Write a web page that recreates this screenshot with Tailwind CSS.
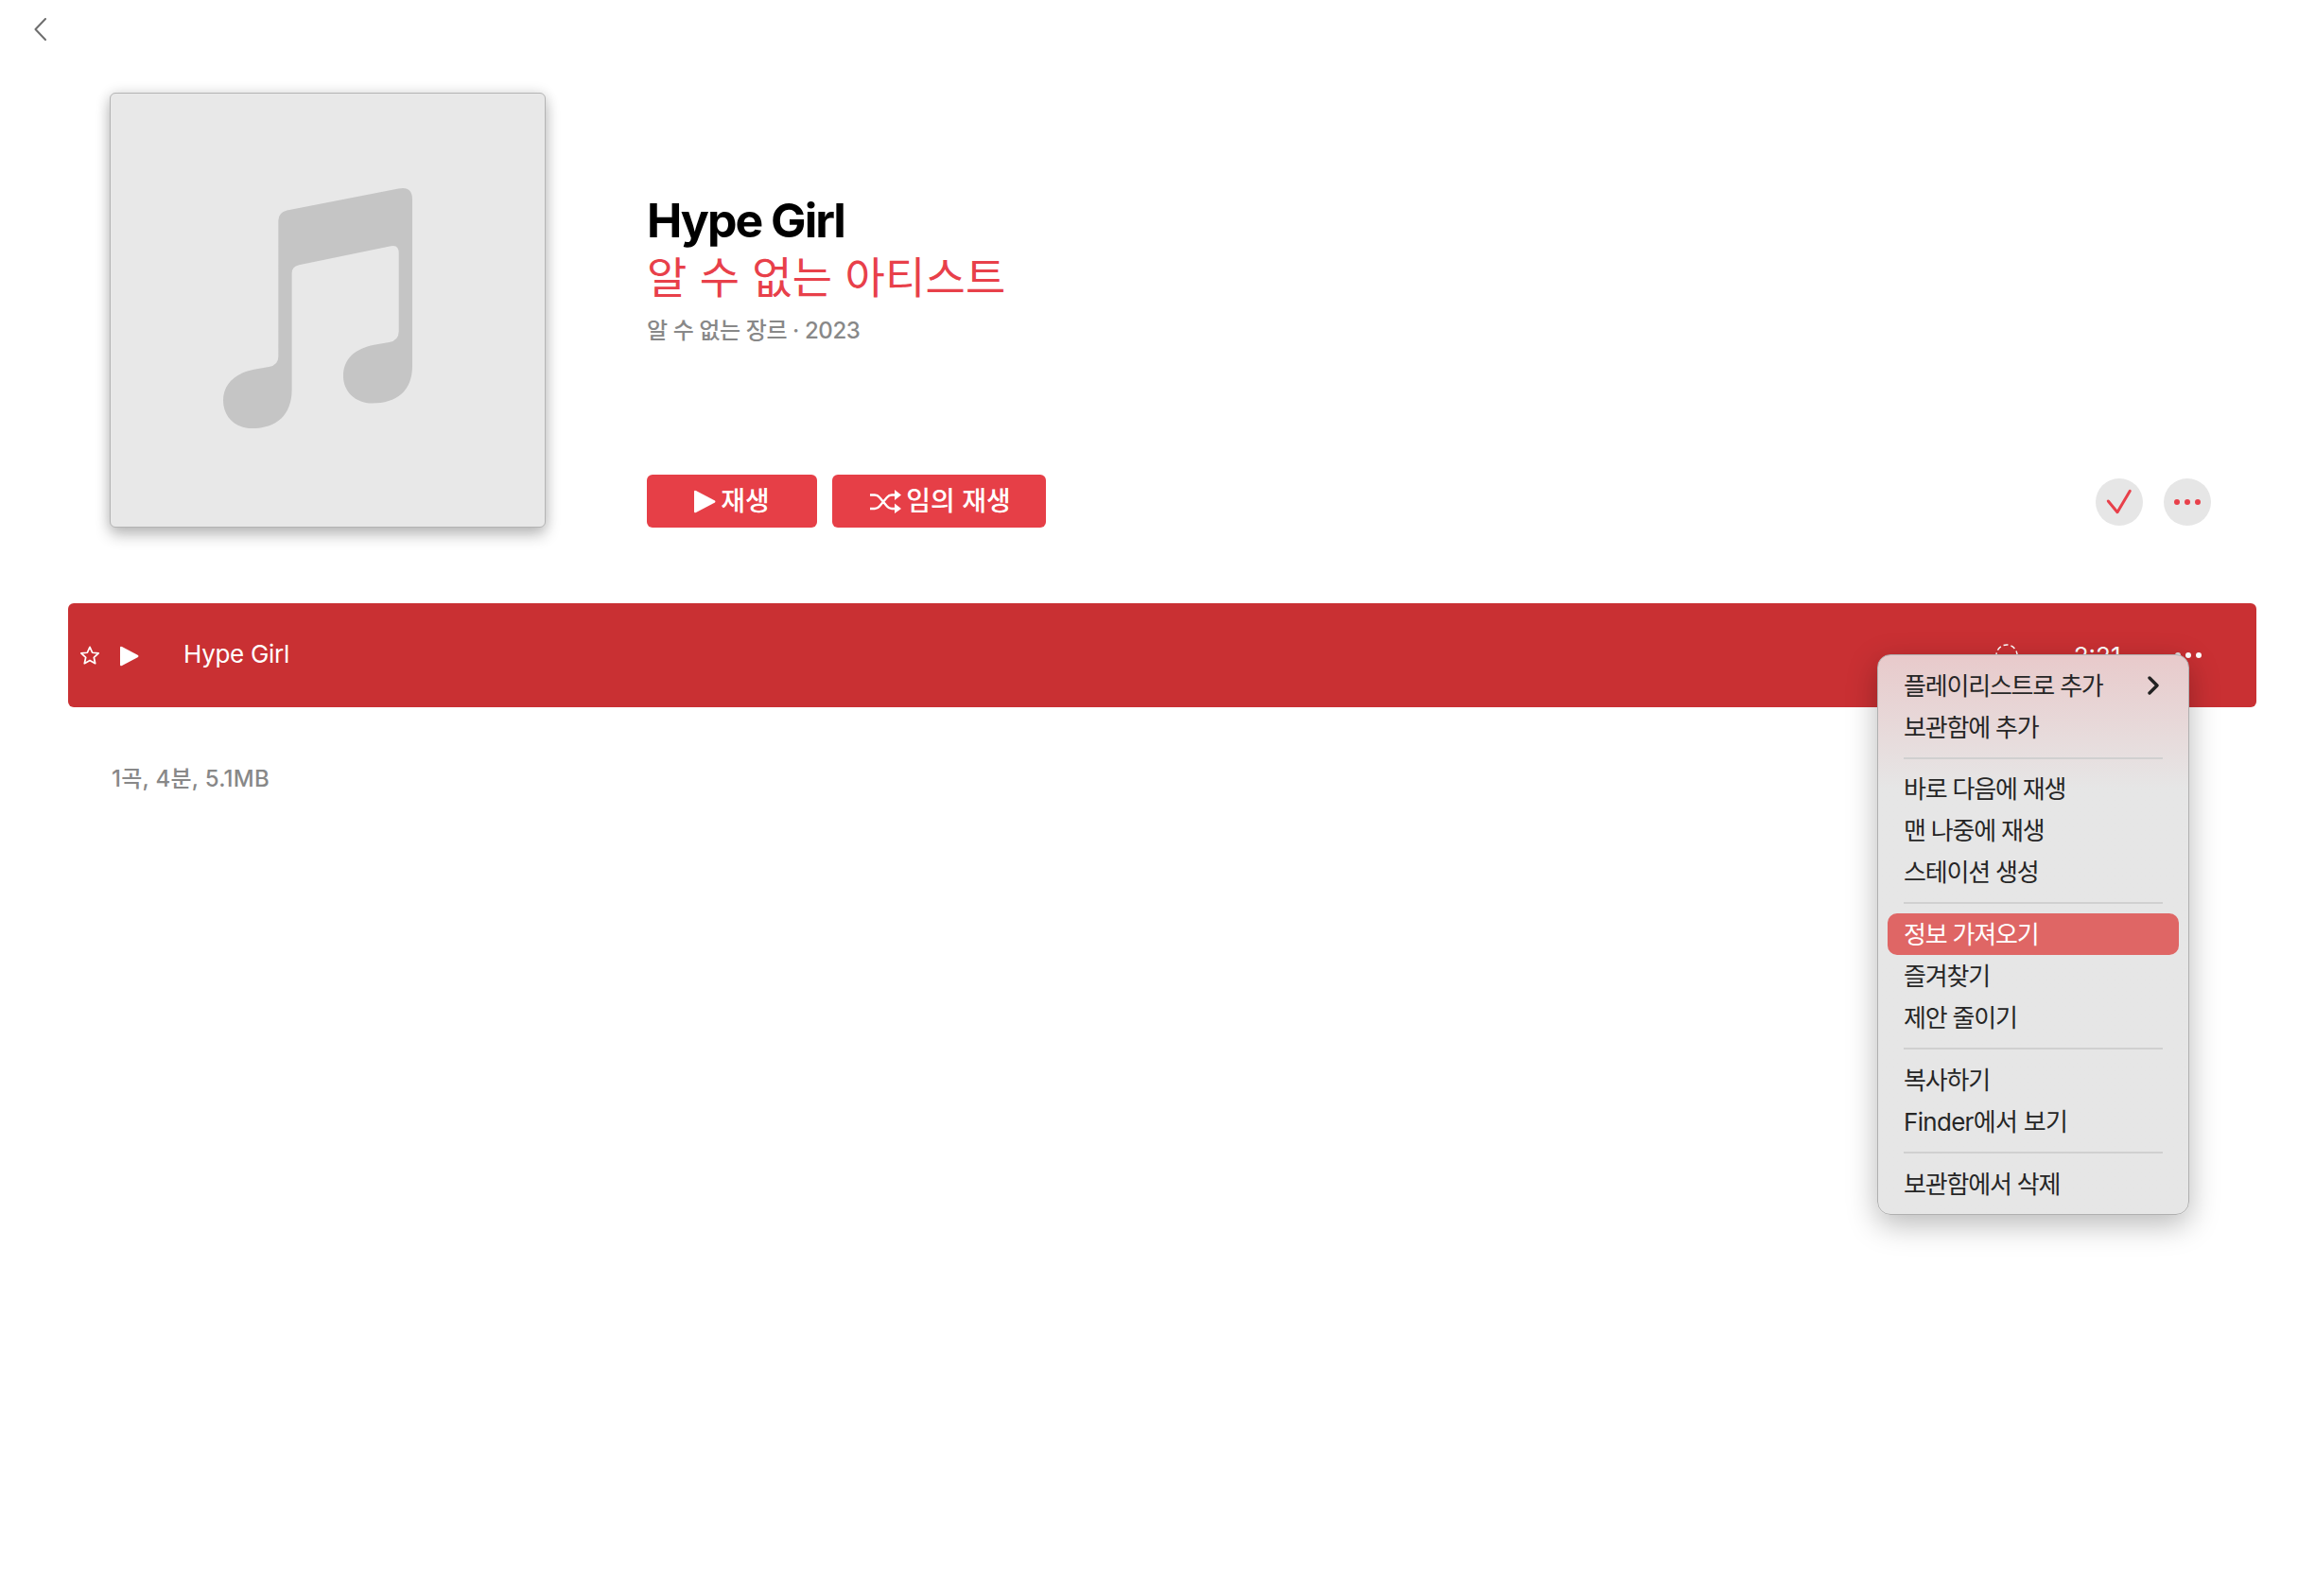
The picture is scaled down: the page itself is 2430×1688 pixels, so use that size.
<!DOCTYPE html>
<html lang="ko">
<head>
    <meta charset="UTF-8">
    <title>Hype Girl</title>
    <script src="https://cdn.jsdelivr.net/npm/@tailwindcss/browser@4"></script>
</head>
<body class="w-[2430px] h-[1688px] overflow-hidden bg-white font-['Inter','Noto_Sans_CJK_KR',sans-serif]">
    <!-- Back button -->
    <div class="h-[98px] pl-[36px] pt-[19px]">
        <svg class="w-[13px] h-[24px]" viewBox="0 0 13 24" fill="none" stroke="#6e6e6e" stroke-width="2" stroke-linecap="round" stroke-linejoin="round"><path d="M12 1 1.5 12 12 23"/></svg>
    </div>

    <!-- Album header -->
    <div class="flex pl-[116px] pr-[92px]">
        <div class="w-[461px] h-[460px] shrink-0 flex items-center justify-center bg-[#e8e8e8] rounded-[6px] border border-[#b4b4b4] shadow-[0_8px_16px_rgba(0,0,0,0.24),0_0_14px_rgba(0,0,0,0.12)]">
            <svg class="w-[200px] h-[255px] ml-[-21px] mt-[-5px]" viewBox="598 518 504 664" preserveAspectRatio="none" fill="#c5c5c5"><path d="M745 610Q745 588 768 582L1065 522Q1102 514 1102 552L1102 1010C1102 1080 1060 1113 995 1113C950 1113 918 1080 918 1038C918 990 950 962 1000 952L1040 945Q1066 940 1066 915L1066 700Q1066 675 1045 680L800 732Q781 736 781 755L781 1075C781 1145 740 1182 675 1182C630 1182 598 1150 598 1105C598 1060 630 1030 680 1020L720 1013Q745 1008 745 985Z"/></svg>
        </div>
        <div class="flex-1 ml-[107px] flex flex-col justify-between">
            <div class="pt-[105px]">
                <h1 class="text-[50px] leading-[60px] font-bold text-black tracking-[-2px]">Hype Girl</h1>
                <p class="text-[46px] leading-[60px] text-[#e8404a] tracking-[0.2px]">알 수 없는 아티스트</p>
                <p class="text-[24px] leading-[32px] mt-[11px] font-medium text-[#888888] tracking-[-0.4px]">알 수 없는 장르 · 2023</p>
            </div>
            <div class="flex items-end justify-between">
                <div class="flex gap-[16px]">
                    <button class="w-[180px] h-[56px] flex items-center justify-center gap-[5px] bg-[#e63f47] rounded-[6px] text-white text-[28px] font-medium">
                        <svg class="w-[23px] h-[25px]" viewBox="0 0 23 25" fill="white"><path d="M0 2Q0 0 2 1L22 11.5Q23 12.5 22 13.5L2 24Q0 25 0 23Z"/></svg>
                        <span>재생</span>
                    </button>
                    <button class="w-[226px] h-[56px] pl-[3px] flex items-center justify-center gap-[5px] bg-[#e63f47] rounded-[6px] text-white text-[28px] font-medium">
                        <svg class="w-[33px] h-[25px]" viewBox="0 0 33 25" fill="white"><path d="M0 5.5H5Q8 5.5 10 8L18 17.5Q20 20 23 20H27M0 20H5Q8 20 10 17.5L18 8Q20 5.5 23 5.5H27" fill="none" stroke="white" stroke-width="2.4"/><path d="M26 0 33 5.5 26 11ZM26 14.5 33 20 26 25Z"/></svg>
                        <span>임의 재생</span>
                    </button>
                </div>
                <div class="flex gap-[22px] mb-[2px]">
                    <button class="w-[50px] h-[50px] rounded-full bg-[#e6e6e6]">
                        <svg class="w-[50px] h-[50px]" viewBox="0 0 50 50" fill="none" stroke="#e8404a" stroke-width="3" stroke-linecap="round" stroke-linejoin="round"><path d="M13.3 24 23 35.7 36.3 13.3"/></svg>
                    </button>
                    <button class="w-[50px] h-[50px] rounded-full bg-[#e6e6e6] flex items-center justify-center gap-[4.5px]">
                        <span class="w-[6.5px] h-[6.5px] rounded-full bg-[#e8404a]"></span>
                        <span class="w-[6.5px] h-[6.5px] rounded-full bg-[#e8404a]"></span>
                        <span class="w-[6.5px] h-[6.5px] rounded-full bg-[#e8404a]"></span>
                    </button>
                </div>
            </div>
        </div>
    </div>

    <!-- Track row with context menu -->
    <div class="relative mt-[80px] ml-[72px] w-[2314px] h-[110px] flex items-center bg-[#c93033] rounded-[6px] text-white pr-[58px]">
        <svg class="ml-[12px] w-[22px] h-[22px]" viewBox="0 0 24 24" fill="none" stroke="white" stroke-width="1.9" stroke-linejoin="round"><path d="M12 2.5 14.9 9 22 9.7 16.7 14.5 18.2 21.5 12 17.9 5.8 21.5 7.3 14.5 2 9.7 9.1 9Z"/></svg>
        <svg class="ml-[21px] mt-[2px] w-[20px] h-[22px]" viewBox="0 0 20 22" fill="white"><path d="M0 2Q0 0 2 1L19 10Q20 11 19 12L2 21Q0 22 0 20Z"/></svg>
        <span class="ml-[47px] mb-[3px] text-[26px] tracking-[-0.3px]">Hype Girl</span>
        <svg class="ml-auto w-[24px] h-[24px]" viewBox="0 0 24 24" fill="none" stroke="white" stroke-width="1.5" stroke-dasharray="5 3"><circle cx="12" cy="12" r="11"/></svg>
        <span class="ml-[59px] text-[26px]">2:21</span>
        <div class="ml-[57px] flex gap-[4.5px]">
            <span class="w-[6.5px] h-[6.5px] rounded-full bg-[#dddddd]"></span>
            <span class="w-[6.5px] h-[6.5px] rounded-full bg-white"></span>
            <span class="w-[6.5px] h-[6.5px] rounded-full bg-white"></span>
        </div>

        <div class="absolute z-10 left-[1913px] top-[54px] w-[330px] px-[10px] pt-[10px] pb-[10px] rounded-[14px] border border-[#b0b0b0] bg-linear-to-b from-[#e8cacb] to-[#e6e6e6] to-[24%] shadow-[0_10px_32px_rgba(0,0,0,0.28)] text-[26px] text-[#262626] tracking-[-1.2px]">
            <div class="h-[44px] px-[17px] flex items-center justify-between">
                <span>플레이리스트로 추가</span>
                <svg class="w-[12px] h-[20px] mr-[4px]" viewBox="0 0 12 20" fill="none" stroke="#222222" stroke-width="3.4" stroke-linecap="round" stroke-linejoin="round"><path d="M2 2 10 10 2 18"/></svg>
            </div>
            <div class="h-[44px] px-[17px] flex items-center">보관함에 추가</div>
            <div class="h-[21px] flex items-center px-[17px]"><div class="w-full h-[2px] bg-[#d0d0d0]"></div></div>
            <div class="h-[44px] px-[17px] flex items-center">바로 다음에 재생</div>
            <div class="h-[44px] px-[17px] flex items-center">맨 나중에 재생</div>
            <div class="h-[44px] px-[17px] flex items-center">스테이션 생성</div>
            <div class="h-[22px] flex items-center px-[17px]"><div class="w-full h-[2px] bg-[#d0d0d0]"></div></div>
            <div class="h-[44px] px-[17px] flex items-center rounded-[10px] bg-[#df6665] text-white">정보 가져오기</div>
            <div class="h-[44px] px-[17px] flex items-center">즐겨찾기</div>
            <div class="h-[44px] px-[17px] flex items-center">제안 줄이기</div>
            <div class="h-[22px] flex items-center px-[17px]"><div class="w-full h-[2px] bg-[#d0d0d0]"></div></div>
            <div class="h-[44px] px-[17px] flex items-center">복사하기</div>
            <div class="h-[44px] px-[17px] flex items-center tracking-[-0.7px]">Finder에서 보기</div>
            <div class="h-[22px] flex items-center px-[17px]"><div class="w-full h-[2px] bg-[#d0d0d0]"></div></div>
            <div class="h-[44px] px-[17px] flex items-center">보관함에서 삭제</div>
        </div>
    </div>

    <!-- Footer summary -->
    <p class="mt-[60px] ml-[118px] text-[24px] leading-[32px] font-medium text-[#888888] tracking-[0.25px]">1곡, 4분, 5.1MB</p>
</body>
</html>
